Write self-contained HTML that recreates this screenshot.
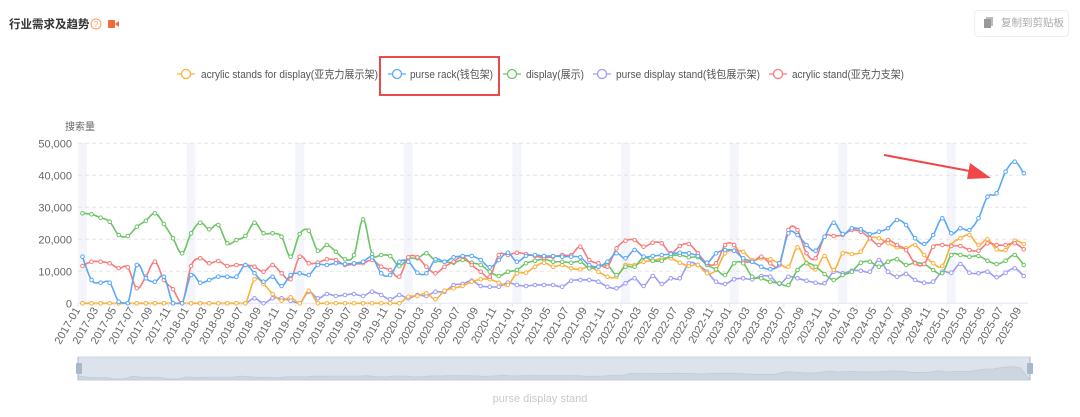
<!DOCTYPE html>
<html><head><meta charset="utf-8">
<style>
body{margin:0;width:1080px;height:417px;background:#fff;overflow:hidden;font-family:"Liberation Sans","Noto Sans CJK SC",sans-serif;position:relative}
.t{position:absolute;left:9px;top:16px;font-size:11.5px;font-weight:bold;color:#333;white-space:nowrap}
.btn{position:absolute;left:974px;top:10px;width:95px;height:27px;border:1px solid #eee;border-radius:4px;box-sizing:border-box;font-size:10.5px;color:#aaa;line-height:25px;padding-left:26px;white-space:nowrap}
</style></head><body>
<div class="t">行业需求及趋势</div>
<svg style="position:absolute;left:89px;top:17px" width="32" height="14">
<circle cx="7" cy="7" r="5" fill="none" stroke="#f5a25a" stroke-width="1"/>
<text x="7" y="10" font-size="8" fill="#f5a25a" text-anchor="middle" font-family="Liberation Sans">?</text>
<rect x="19" y="3" width="7" height="8" rx="1" fill="#f06a3a"/><path d="M26 7 L30 4 V10 Z" fill="#f06a3a"/>
</svg>
<div class="btn">复制到剪贴板</div>
<svg style="position:absolute;left:983px;top:17px" width="12" height="13"><rect x="3" y="0" width="7" height="9" fill="#bbb"/><rect x="1" y="2" width="7" height="9" fill="#999"/></svg>
<svg id="c" width="1080" height="417" style="position:absolute;left:0;top:0"></svg>
<script>
var g=document.getElementById('c');var h='';
var leg=[[186,'#fbb13c','acrylic stands for display(亚克力展示架)',201,177],[397,'#5aa8f8','purse rack(钱包架)',410,83],[512,'#6cc464','display(展示)',526,58],[602,'#9c9cf5','purse display stand(钱包展示架)',616,144],[778,'#f67b7b','acrylic stand(亚克力支架)',792,112]];
leg.forEach(function(l){h+='<line x1="'+(l[0]-9)+'" y1="74" x2="'+(l[0]+9)+'" y2="74" stroke="'+l[1]+'" stroke-width="1.3"/><circle cx="'+l[0]+'" cy="74" r="4.5" fill="#fff" stroke="'+l[1]+'" stroke-width="1.3"/><text x="'+l[3]+'" y="78" font-size="11" fill="#555" textLength="'+l[4]+'" lengthAdjust="spacingAndGlyphs">'+l[2]+'</text>';});
h+='<rect x="380" y="57" width="119" height="38" fill="none" stroke="#e84a4a" stroke-width="2"/>';
h+='<text x="65" y="130" font-size="10" fill="#666">搜索量</text>';
for(var k=0;k<9;k++){var bx=78+9.05*12*k;h+='<rect x="'+bx+'" y="143" width="9" height="160" fill="#f3f5fa"/>';}
var yl=['50,000','40,000','30,000','20,000','10,000','0'];
for(var i=0;i<6;i++){var y=143.3+32*i;h+='<line x1="78" y1="'+y+'" x2="1028" y2="'+y+'" stroke="'+(i==5?'#e0e6f1':'#e5e5e5')+'" '+(i==5?'':'stroke-dasharray="4,3"')+'/><text x="72" y="'+(y+4)+'" font-size="11" fill="#666" text-anchor="end">'+yl[i]+'</text>';}
function X(n){return 82.5+9.05*n}
var Z=function(z){return 130+z/3};
var S={
o:[520,520,520,520,520,520,520,520,520,520,520,520,520,520,520,520,520,520,520,448,462,492,512,502,520,482,520,520,520,520,520,520,520,520,520,520,500,498,490,508,482,475,468,455,448,448,458,465,430,428,410,398,410,405,415,418,410,425,440,440,405,405,395,392,385,385,398,408,405,430,420,370,362,365,390,385,388,400,410,352,398,418,378,420,370,372,365,325,325,340,352,355,345,375,400,408,345,325,315,345,328,358,360,332,342],
b:[380,450,458,458,515,520,405,445,455,440,520,520,435,458,450,440,440,440,405,430,455,440,468,435,430,435,405,405,400,402,400,395,382,430,435,395,395,428,430,388,395,382,378,378,390,412,390,368,395,378,375,378,378,380,380,382,405,410,395,370,385,360,380,378,375,372,368,370,378,398,370,360,362,385,395,410,418,400,310,315,345,362,320,278,312,295,298,312,305,295,270,285,325,342,315,265,310,295,300,265,200,190,125,95,130],
g:[250,253,263,275,315,318,290,272,250,282,325,370,310,278,298,285,340,330,318,278,310,310,320,380,312,302,362,345,365,388,375,268,372,375,378,408,385,385,370,392,395,398,390,398,405,425,438,425,420,400,392,388,395,395,398,395,415,410,405,435,410,410,382,392,392,378,375,382,382,405,418,435,400,400,440,445,455,460,465,420,400,410,432,450,435,425,398,395,410,395,388,405,398,402,420,430,375,375,380,378,392,402,392,375,405],
p:[520,520,520,520,520,520,520,520,520,520,520,520,520,520,520,520,520,520,520,505,520,505,505,512,520,485,505,492,498,495,492,498,485,495,508,495,505,495,498,485,485,465,462,452,468,470,470,458,465,468,465,465,465,470,452,450,450,455,470,475,460,445,468,438,462,445,445,400,405,425,455,462,448,445,448,438,440,462,440,445,452,458,460,425,430,422,422,425,390,425,440,432,450,458,455,425,428,402,428,430,425,442,428,415,438],
r:[408,395,395,400,415,412,475,440,395,450,478,520,408,385,400,393,408,405,405,410,425,405,430,448,380,400,398,388,390,405,402,400,390,410,420,440,382,382,410,430,410,395,380,405,425,440,375,375,368,372,378,383,380,375,375,350,390,400,410,355,332,330,350,338,340,370,348,342,370,400,400,345,345,390,395,380,400,405,300,300,370,385,320,318,315,300,305,325,345,330,345,360,400,402,350,345,348,348,360,362,340,345,345,340,358]
};
var cols={o:'#fbb13c',b:'#5aa8f8',g:'#6cc464',p:'#9c9cf5',r:'#f67b7b'};
function path(a){var pts=a.map(function(z,n){return [X(n),Z(z)]});var d='M'+pts[0][0]+','+pts[0][1];
for(var i=0;i<pts.length-1;i++){var p0=pts[Math.max(0,i-1)],p1=pts[i],p2=pts[i+1],p3=pts[Math.min(pts.length-1,i+2)];var t=0.18;
d+=' C'+(p1[0]+(p2[0]-p0[0])*t).toFixed(1)+','+Math.min(303.3,p1[1]+(p2[1]-p0[1])*t).toFixed(1)+' '+(p2[0]-(p3[0]-p1[0])*t).toFixed(1)+','+Math.min(303.3,p2[1]-(p3[1]-p1[1])*t).toFixed(1)+' '+p2[0].toFixed(1)+','+p2[1].toFixed(1);}
return [d,pts];}
['p','o','g','r','b'].forEach(function(k){var r=path(S[k]);h+='<path d="'+r[0]+'" fill="none" stroke="'+cols[k]+'" stroke-width="1.6"/>';r[1].forEach(function(p){h+='<circle cx="'+p[0].toFixed(1)+'" cy="'+p[1].toFixed(1)+'" r="1.8" fill="#fff" stroke="'+cols[k]+'" stroke-width="1"/>';});});
h+='<path d="M884 155 L975 172" stroke="#f04848" stroke-width="2"/><path d="M970 163 L991 178 L967 179 Z" fill="#f04848"/>';
for(var n=0;n<105;n+=2){var yr=2017+Math.floor(n/12),m=n%12+1;var lb=yr+'-'+(m<10?'0':'')+m;var x=X(n)-2;
h+='<line x1="'+(X(n)-4.5)+'" y1="303" x2="'+(X(n)-4.5)+'" y2="307" stroke="#e0e6f1"/>';
h+='<text transform="translate('+x+',310) rotate(-60)" font-size="11" fill="#666" text-anchor="end">'+lb+'</text>';}
h+='<rect x="78" y="357" width="952" height="23" fill="#dde3ec" stroke="#d2d9e4"/>';
var ap='M78,372';S.b.forEach(function(z,n){var v=(520-z);ap+=' L'+(78+n*9.06).toFixed(1)+','+(379-v/520*18*0.7-(n>60?2:0)).toFixed(1);});
h+='<path d="'+ap+' L1030,380 L78,380 Z" fill="#cdd5e0" stroke="#c2cad6" stroke-width="0.8"/>';
h+='<rect x="76" y="363" width="6" height="11" rx="1" fill="#a7b7cc"/><rect x="1027" y="363" width="6" height="11" rx="1" fill="#a7b7cc"/>';
h+='<line x1="78" y1="357" x2="78" y2="380" stroke="#a7b7cc"/><line x1="1030" y1="357" x2="1030" y2="380" stroke="#a7b7cc"/>';
h+='<text x="540" y="402" font-size="11" fill="#c8c8c8" text-anchor="middle">purse display stand</text>';
g.innerHTML=h;
</script>
</body></html>
